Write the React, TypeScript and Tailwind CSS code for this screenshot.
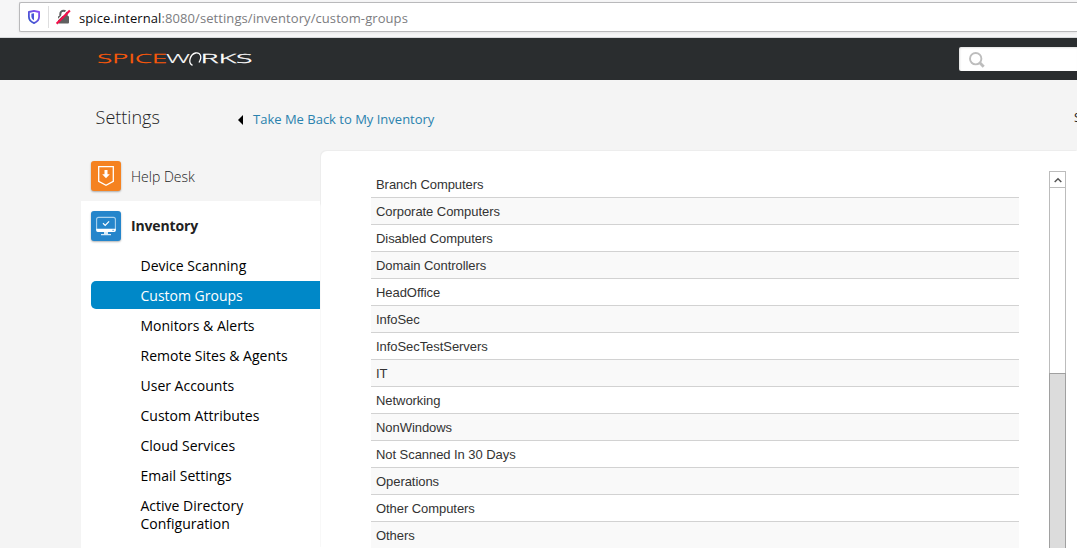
import type { ReactNode } from "react";

const groups = [
  "Branch Computers",
  "Corporate Computers",
  "Disabled Computers",
  "Domain Controllers",
  "HeadOffice",
  "InfoSec",
  "InfoSecTestServers",
  "IT",
  "Networking",
  "NonWindows",
  "Not Scanned In 30 Days",
  "Operations",
  "Other Computers",
  "Others",
];

const links = [
  "Device Scanning",
  "Custom Groups",
  "Monitors & Alerts",
  "Remote Sites & Agents",
  "User Accounts",
  "Custom Attributes",
  "Cloud Services",
  "Email Settings",
  "Active Directory Configuration",
];

function AddressBar() {
  return (
    <div className="flex h-[38px] shrink-0 border-b border-[#d7d9db] bg-[#f6f6f7] pt-[2px] pl-[19px]">
      <div className="flex h-[30px] flex-1 items-center rounded-l-[2px] border border-r-0 border-[#b9b9bb] bg-white shadow-[0_1px_3px_rgba(0,0,0,0.08)]">
        <svg className="ml-2 h-[14px] w-[12px] shrink-0" viewBox="0 0 12 14" fill="none">
          <defs>
            <linearGradient id="shield" x1="1" y1="0" x2="0" y2="1">
              <stop offset="0" stopColor="#8d4cf5" />
              <stop offset="1" stopColor="#3157c8" />
            </linearGradient>
          </defs>
          <path d="M6 .9 11.1 2v4.8c0 2.8-2 5.1-5.1 6.3C2.900 11.900.9 9.600.9 6.800V2Z" stroke="url(#shield)" strokeWidth="1.8" strokeLinejoin="round" />
          <path d="M6 3.300V10.300C4.200 9.200 3.400 8 3.400 6.500V3.800Z" fill="#4a55d8" />
        </svg>
        <div className="ml-2 h-[22px] w-px bg-[#dededf]" />
        <svg className="ml-[7px] h-[16px] w-[15px] shrink-0" viewBox="0 0 15 16">
          <rect x="2" y="7" width="11" height="7.500" rx="1" fill="#606060" />
          <path d="M4.300 7.500V5a3.200 3.200 0 0 1 6.400 0v2.500" fill="none" stroke="#606060" strokeWidth="2" />
          <path d="M0 12.700 12.200.5" stroke="#fff" strokeWidth="1.200" />
          <path d="M.6 14.700 13.900 1.400" stroke="#f5104a" strokeWidth="2.100" />
        </svg>
        <div className="ml-[8px] pt-[2px] font-['Open_Sans','Noto_Sans',sans-serif] text-[13px] leading-5 tracking-[0.08px] whitespace-nowrap text-[#7c7c80]">
          <span className="text-[#0c0c0d]">spice.internal</span>:8080/settings/inventory/custom-groups
        </div>
      </div>
    </div>
  );
}

function Logo() {
  return (
    <svg className="h-[18px] w-[158px]" viewBox="0 0 158 18" fontFamily="'Open Sans', 'Noto Sans', sans-serif" fontSize="13" fontWeight="300">
      <text x="-0.800" y="13.300" textLength="70" lengthAdjust="spacingAndGlyphs" fill="#ff5a0a" stroke="#ff5a0a" strokeWidth="0.300">SPICE</text>
      <text x="68" y="13.300" textLength="24" lengthAdjust="spacingAndGlyphs" fill="#fff" stroke="#fff" strokeWidth="0.150">W</text>
      <path d="M94.500 15.300C89.500 13 92 4.500 97.500 3c5-.8 7 4 3.500 9.500" fill="none" stroke="#fff" strokeWidth="1.300" />
      <text x="102.500" y="13.300" textLength="52" lengthAdjust="spacingAndGlyphs" fill="#fff" stroke="#fff" strokeWidth="0.300">RKS</text>
    </svg>
  );
}

function TopBar() {
  return (
    <header className="flex h-[42px] shrink-0 items-center justify-between bg-[#2a2d2f] pl-[98px]">
      <Logo />
      <div className="flex h-6 w-[118px] items-center rounded-l-[2px] bg-white pl-[10px] shadow-[inset_1px_1px_2px_rgba(0,0,0,0.12)]">
        <svg className="mt-px h-4 w-4" viewBox="0 0 16 16" fill="none" stroke="#bdbdbd">
          <circle cx="6.700" cy="6.700" r="5.700" strokeWidth="1.900" />
          <path d="m10.800 10.800 3.900 3.900" strokeWidth="2.900" />
        </svg>
      </div>
    </header>
  );
}

function IconTile({ color, children }: { color: string; children: ReactNode }) {
  return (
    <div className={`flex size-[30px] shrink-0 items-center justify-center rounded-[3px] shadow-[0_1px_2px_rgba(0,0,0,0.3)] ${color}`}>
      {children}
    </div>
  );
}

function Sidebar() {
  return (
    <aside className="flex w-[239px] shrink-0 flex-col">
      <div className="flex h-[50px] shrink-0 items-center pl-[10px]">
        <IconTile color="bg-[#f58220]">
          <svg className="size-[30px]" viewBox="0 0 30 30">
            <path d="M7.700 5.700h14.600v14.600L15 24.200l-7.300-3.900Z" fill="none" stroke="#fff" strokeWidth="1.300" />
            <path d="M13.500 9h3v4.200h2.300L15 17.300l-3.800-4.100h2.300Z" fill="#fff" />
          </svg>
        </IconTile>
        <span className="ml-[10px] pt-px text-[14px] font-light text-[#222]">Help Desk</span>
      </div>
      <div className="flex-1 bg-white pl-[10px]">
        <div className="flex h-[50px] items-center">
          <IconTile color="bg-[#2485cb]">
            <svg className="size-[30px]" viewBox="0 0 30 30" fill="none">
              <rect x="5.600" y="6.400" width="18.800" height="14" rx="2" stroke="#a9d2ee" strokeWidth="1.100" />
              <path d="M5.200 17.800h19.600v1.200a2 2 0 0 1-2 2H7.200a2 2 0 0 1-2-2Z" fill="#fff" />
              <path d="M13 21h4v2h3v1.200H10V23h3Z" fill="#d8ecf9" />
              <path d="m12 12.300 2.200 2.100 3.900-4" stroke="#fff" strokeWidth="1.200" />
              <path d="M21.500 19.300h1.200" stroke="#2485cb" />
            </svg>
          </IconTile>
          <span className="ml-[10px] pb-[2px] text-[14px] font-bold tracking-[-0.15px] text-[#222]">Inventory</span>
        </div>
        <nav className="flex flex-col">
          {links.map((label) => (
            <a
              key={label}
              className={
                label === "Custom Groups"
                  ? "mb-[2px] rounded-l-[5px] bg-[#0088c8] pt-[6px] pr-6 pb-1 pl-[49.500px] text-[14px] leading-[18px] text-white"
                  : "py-[6px] pr-6 pl-[49.500px] text-[14px] leading-[18px] text-black"
              }
            >
              {label}
            </a>
          ))}
        </nav>
      </div>
    </aside>
  );
}

function GroupList() {
  return (
    <div className="w-[648px] shrink-0 font-['Liberation_Sans',Arial,sans-serif] text-[13px] tracking-[-0.06px] text-[#333]">
      {groups.map((name) => (
        <div key={name} className="flex h-[27px] items-center border-b border-[#d2d2d2] pt-[2px] pl-[5px] even:bg-[#f9f9f9]">
          {name}
        </div>
      ))}
    </div>
  );
}

function Scrollbar() {
  return (
    <div className="ml-[30px] flex h-[390px] w-[17px] shrink-0 flex-col border border-[#bcbcbc] bg-white">
      <div className="flex h-4 shrink-0 items-center justify-center border-b border-[#bcbcbc]">
        <svg className="mt-px h-[6px] w-2" viewBox="0 0 8 6" fill="none">
          <path d="m.7 5 3.300-3.300L7.300 5" stroke="#555" strokeWidth="1.500" />
        </svg>
      </div>
      <div className="-mx-px mt-[185px] flex-1 border border-[#a0a0a0] bg-[#dcdcdc]" />
    </div>
  );
}

export default function App() {
  return (
    <div className="flex h-[548px] w-[1077px] flex-col overflow-hidden bg-[#f4f4f4] font-['Open_Sans','Noto_Sans',sans-serif]">
      <AddressBar />
      <TopBar />
      <div className="flex h-[71px] shrink-0 items-center overflow-hidden pl-[95px] whitespace-nowrap">
        <h1 className="w-[143px] shrink-0 pt-[2px] pl-[0.600px] text-[18px] leading-6 font-light text-[#222]">Settings</h1>
        <svg className="mt-2 h-[10px] w-[5px] shrink-0" viewBox="0 0 5 10">
          <path d="M5 0v10L0 5Z" />
        </svg>
        <a className="mt-2 ml-[10px] w-[821px] shrink-0 text-[13px] text-[#2a82ae]">Take Me Back to My Inventory</a>
        <span className="mt-[5px] shrink-0 text-[13px] text-[#222]">S</span>
      </div>
      <div className="flex min-h-0 flex-1 pl-[81px]">
        <Sidebar />
        <main className="ml-px flex min-w-0 flex-1 items-start rounded-tl-[6px] bg-white pt-5 pl-[50px] shadow-[-1px_-1px_1px_rgba(0,0,0,0.03),-1px_50px_0_#fff]">
          <GroupList />
          <Scrollbar />
        </main>
      </div>
    </div>
  );
}
